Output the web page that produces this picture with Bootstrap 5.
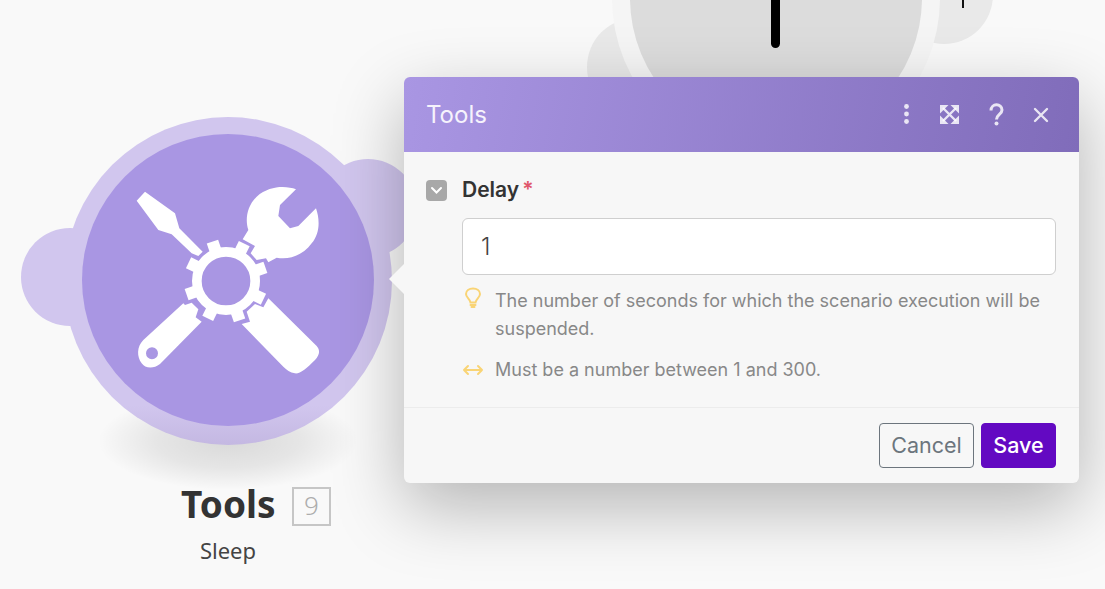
<!DOCTYPE html>
<html lang="en">
<head>
  <meta charset="UTF-8" />
  <meta name="viewport" content="width=device-width, initial-scale=1" />
  <title>Tools - Sleep</title>
  <link href="https://cdn.jsdelivr.net/npm/bootstrap@5.3.3/dist/css/bootstrap.min.css" rel="stylesheet" />
  <style>
  html, body { height: 100%; }
  body {
    background: #f9f9f9;
    overflow: hidden;
    font-family: "Inter", "Liberation Sans", sans-serif;
  }
  .scene { position: relative; width: 1105px; height: 589px; overflow: hidden; }

  /* canvas nodes */
  .blob { position: absolute; border-radius: 50%; }
  .tools-blob-l { left: 21px; top: 228px; width: 98px; height: 98px; background: #d1c6ee; }
  .tools-blob-r { left: 319px; top: 159px; width: 98px; height: 98px; background: #d1c6ee; }
  .tools-shadow {
    left: 98px; top: 392px; width: 260px; height: 98px;
    background: radial-gradient(closest-side, rgba(0,0,0,.13), rgba(0,0,0,.08) 55%, rgba(0,0,0,0));
  }
  .tools-ring {
    left: 64px; top: 117px; width: 328px; height: 328px;
    background: linear-gradient(180deg, #d1c6ee 88%, #c4b8e2);
  }
  .tools-face {
    left: 82px; top: 134px; width: 292px; height: 292px; background: #a996e3;
  }
  .tools-icon { position: absolute; left: 130px; top: 180px; width: 200px; height: 200px; }
  .sleep-blob-l { left: 587px; top: 18px; width: 98px; height: 98px; background: #e9e9e9; }
  .sleep-blob-r { left: 895px; top: -54px; width: 98px; height: 98px; background: #e9e9e9; }
  .sleep-ring { left: 612px; top: -166px; width: 328px; height: 328px; background: #f5f5f5; }
  .sleep-face { left: 630px; top: -148px; width: 292px; height: 292px; background: #dcdcdc; }
  .sleep-hand { position: absolute; left: 771px; top: -10px; width: 9px; height: 58px; background: #000; border-radius: 5px; }
  .sleep-tick { position: absolute; left: 962px; top: -10px; width: 2px; height: 18px; background: #111; }

  .node-title {
    position: absolute; left: 181px; top: 479px;
    font-family: "Noto Sans", "Open Sans", sans-serif;
    font-weight: 700; font-size: 37px; line-height: 50px; color: #333;
  }
  .node-count {
    position: absolute; left: 292px; top: 487px; width: 39px; height: 39px;
    border: 2px solid #c6c6c6; color: #adadad;
    font-family: "Noto Sans", sans-serif; font-weight: 300; font-size: 26px; line-height: 33px; text-align: center;
  }
  .node-sub {
    position: absolute; left: 128px; width: 200px; top: 535px; text-align: center;
    font-family: "Noto Sans", sans-serif; font-size: 22px; line-height: 30px; color: #444;
  }

  /* settings panel */
  .panel-tip {
    position: absolute; left: 389px; top: 264px; width: 0; height: 0;
    border-top: 15px solid transparent; border-bottom: 15px solid transparent;
    border-right: 15px solid #f7f7f7;
  }
  .panel.card {
    position: absolute; left: 404px; top: 77px; width: 675px; height: 406px;
    border: 0; border-radius: 6px; background: #f7f7f7; overflow: visible;
    box-shadow: 0 24px 70px rgba(0,0,0,.28);
  }
  .panel .card-header {
    height: 75px; padding: 0 23px 0 22px; border: 0; border-radius: 6px 6px 0 0;
    background: linear-gradient(100deg, #a996e3, #806cba);
    color: #f6f3fc; font-size: 24px; line-height: 73px;
  }
  .head-tools { width: 157px; height: 40px; }
  .panel .card-body { padding: 26px 23px 0 22px; }
  .collapse-box {
    width: 21px; height: 21px; border-radius: 4px; background: #a8a8a8;
    flex: none; margin-top: 1px;
  }
  .delay-label { font-size: 21px; font-weight: 600; line-height: 24px; color: #333; margin-left: 15px; }
  .req-star { color: #e0566b; font-weight: 600; margin-left: 3px; }
  .delay-input.form-control {
    margin: 16px 0 0 36px; width: 594px; height: 57px; padding: 0 18px;
    border: 1px solid #cfcfcf; border-radius: 6px; font-size: 24px; font-weight: 300; color: #444; box-shadow: none;
  }
  .hint { margin: 12px 0 0 36px; color: #888; font-size: 18px; line-height: 28px; }
  .hint + .hint { margin-top: 13px; }
  .hint-icon { width: 22px; flex: none; margin-right: 11px; }
  .panel .card-footer {
    height: 76px; padding: 15px 23px 0; border-top: 1px solid #ececec; border-radius: 0 0 6px 6px;
    background: transparent; gap: 7px;
  }
  .btn-cancel.btn { width: 95px; height: 45px; padding: 0; font-size: 21.5px; border-radius: 4px; border-color: #6c757d; color: #6c757d; }
  .btn-save.btn { width: 75px; height: 45px; padding: 0; font-size: 21.5px; font-weight: 500; border-radius: 4px; background: #6309c2; border-color: #6309c2; color: #fff; }
  </style>
</head>
<body>

<div class="scene">

  <!-- Sleep node behind the panel -->
  <div class="blob sleep-blob-l"></div>
  <div class="blob sleep-blob-r"></div>
  <div class="blob sleep-ring"></div>
  <div class="blob sleep-face"></div>
  <div class="sleep-hand"></div>
  <div class="sleep-tick"></div>

  <!-- Tools node -->
  <div class="blob tools-blob-l"></div>
  <div class="blob tools-blob-r"></div>
  <div class="blob tools-shadow"></div>
  <div class="blob tools-ring"></div>
  <div class="blob tools-face"></div>
  <svg class="tools-icon" viewBox="0 0 600 600" fill="#fff">
    <path d="M45 35 20 62 85 150 125 163 185 220 205 228 218 215 148 145 135 100Z"/>
    <path d="M498 28C470 18 420 15 380 50 350 80 345 120 355 150L338 178 375 198 362 220 380 240 408 235 415 247 440 233C480 240 520 225 545 190 570 160 570 120 558 85L505 138 480 145 445 108 450 75Z"/>
    <circle cx="288" cy="303" r="87.5" fill="none" stroke="#fff" stroke-width="29"/>
    <g>
      <rect x="270" y="178" width="36" height="32" transform="rotate(-19 288 303)"/>
      <rect x="270" y="178" width="36" height="32" transform="rotate(26 288 303)"/>
      <rect x="270" y="178" width="36" height="32" transform="rotate(71 288 303)"/>
      <rect x="270" y="178" width="36" height="32" transform="rotate(116 288 303)"/>
      <rect x="270" y="178" width="36" height="32" transform="rotate(161 288 303)"/>
      <rect x="270" y="178" width="36" height="32" transform="rotate(206 288 303)"/>
      <rect x="270" y="178" width="36" height="32" transform="rotate(251 288 303)"/>
      <rect x="270" y="178" width="36" height="32" transform="rotate(296 288 303)"/>
    </g>
    <path fill-rule="evenodd" d="M160 370 40 480C20 500 20 530 35 550 45 565 70 568 90 552L215 425 197 412 205 388 185 368 165 375ZM66 502A18 18 0 1 0 66 538 18 18 0 1 0 66 502Z"/>
    <path d="M415 355 560 498C572 512 568 525 555 540 530 565 510 582 495 580 480 578 470 570 460 560L335 432 360 425 350 395 375 372 400 382Z"/>
  </svg>

  <div class="node-title">Tools</div>
  <div class="node-count">9</div>
  <div class="node-sub">Sleep</div>

  <!-- Settings panel -->
  <div class="panel card">
    <div class="card-header d-flex justify-content-between align-items-center">
      <span>Tools</span>
      <svg class="head-tools" viewBox="0 0 157 40" fill="none" stroke="#fff" stroke-opacity=".82">
        <g fill="#fff" fill-opacity=".82" stroke="none">
          <circle cx="7.500" cy="11.500" r="2.400"/><circle cx="7.500" cy="19" r="2.400"/><circle cx="7.500" cy="26.500" r="2.400"/>
        </g>
        <path stroke-width="2.400" d="M44 13 57 26M57 13 44 26"/>
        <g fill="#fff" fill-opacity=".82" stroke="none">
          <path d="M41 10H49.500L41 18.500Z"/>
          <path d="M60 10V18.500L51.500 10Z"/>
          <path d="M41 29V20.500L49.500 29Z"/>
          <path d="M60 29H51.500L60 20.500Z"/>
        </g>
        <path stroke-width="3" d="M92 15.500C92 8 103 8 103 15 103 19.500 97.500 19.500 97.500 24.500"/>
        <circle cx="97.500" cy="28.500" r="2" fill="#fff" fill-opacity=".82" stroke="none"/>
        <path stroke-width="2.400" stroke-linecap="round" d="M136 14 148 26M148 14 136 26"/>
      </svg>
    </div>
    <div class="card-body">
      <div class="d-flex align-items-center">
        <div class="collapse-box d-flex align-items-center justify-content-center">
          <svg width="13" height="9" viewBox="0 0 13 9" fill="none" stroke="#fff" stroke-width="2" stroke-linecap="round"><path d="M2 2 6.500 6.500 11 2"/></svg>
        </div>
        <span class="delay-label">Delay<span class="req-star">*</span></span>
      </div>
      <input class="delay-input form-control" type="text" value="1" />
      <div class="hint d-flex">
        <svg class="hint-icon" height="21" viewBox="0 0 22 21" fill="none" stroke="#f9d475" stroke-width="2" stroke-linecap="round">
          <path d="M8.500 15.500C8 12 4 10.500 4 7 4 3.500 7 1.500 11 1.500S18 3.500 18 7C18 10.500 14 12 13.500 15.500Z"/>
          <path d="M8.500 18H13.500M9.500 20H12.500"/>
        </svg>
        <div>The number of seconds for which the scenario execution will be suspended.</div>
      </div>
      <div class="hint d-flex align-items-center">
        <svg class="hint-icon" height="14" viewBox="0 0 22 14" fill="none" stroke="#f9d475" stroke-width="2" stroke-linecap="round" stroke-linejoin="round">
          <path d="M2 7H20M6 3 2 7 6 11M16 3 20 7 16 11"/>
        </svg>
        <div>Must be a number between 1 and 300.</div>
      </div>
    </div>
    <div class="card-footer d-flex justify-content-end">
      <button class="btn btn-outline-secondary btn-cancel" type="button">Cancel</button>
      <button class="btn btn-save" type="button">Save</button>
    </div>
  </div>
  <div class="panel-tip"></div>

</div>

<script src="https://cdn.jsdelivr.net/npm/bootstrap@5.3.3/dist/js/bootstrap.bundle.min.js"></script>
</body>
</html>
